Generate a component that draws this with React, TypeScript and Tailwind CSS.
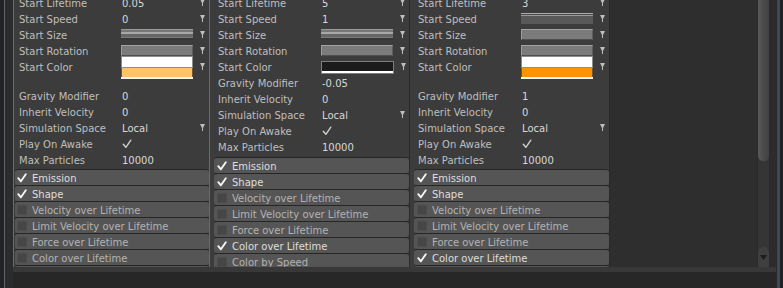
import React from 'react';

type Field =
  | { kind: 'text'; value: string }
  | { kind: 'curve' }
  | { kind: 'curveTop' }
  | { kind: 'box' }
  | { kind: 'gradient'; swatch: string }
  | { kind: 'black' }
  | { kind: 'check' };

type Row = { label: string; field: Field; arrow?: boolean; tall?: boolean };
type Module = { name: string; on: boolean };

type Col = {
  rows: Row[];
  modules: Module[];
  frame: string;
  pad: string;
  labelW: string;
  modWrap: string;
  modPad: string;
};

const tail = (gravity: string): Row[] => [
  { label: 'Gravity Modifier', field: { kind: 'text', value: gravity } },
  { label: 'Inherit Velocity', field: { kind: 'text', value: '0' } },
  { label: 'Simulation Space', field: { kind: 'text', value: 'Local' }, arrow: true },
  { label: 'Play On Awake', field: { kind: 'check' } },
  { label: 'Max Particles', field: { kind: 'text', value: '10000' } },
];

const mods = (colorOn: boolean): Module[] => [
  { name: 'Emission', on: true },
  { name: 'Shape', on: true },
  { name: 'Velocity over Lifetime', on: false },
  { name: 'Limit Velocity over Lifetime', on: false },
  { name: 'Force over Lifetime', on: false },
  { name: 'Color over Lifetime', on: colorOn },
  { name: 'Color by Speed', on: false },
];

const columns: Col[] = [
  {
    frame: 'w-[197px] border-x border-[#3a6fd6]',
    pad: 'pl-[5px]',
    labelW: 'w-[102px]',
    modWrap: 'mt-[1px] ml-[1px]',
    modPad: 'pl-[2px]',
    rows: [
      { label: 'Start Lifetime', field: { kind: 'text', value: '0.05' }, arrow: true },
      { label: 'Start Speed', field: { kind: 'text', value: '0' }, arrow: true },
      { label: 'Start Size', field: { kind: 'curve' }, arrow: true },
      { label: 'Start Rotation', field: { kind: 'box' }, arrow: true },
      { label: 'Start Color', field: { kind: 'gradient', swatch: 'bg-[#ffc468]' }, arrow: true, tall: true },
      ...tail('0'),
    ],
    modules: mods(false),
  },
  {
    frame: 'w-[200px] border-r border-[#2a2a2a]',
    pad: 'pl-[8px]',
    labelW: 'w-[103px]',
    modWrap: 'mt-[2px] ml-[4px]',
    modPad: 'pl-[3px]',
    rows: [
      { label: 'Start Lifetime', field: { kind: 'text', value: '5' }, arrow: true },
      { label: 'Start Speed', field: { kind: 'text', value: '1' }, arrow: true },
      { label: 'Start Size', field: { kind: 'curve' }, arrow: true },
      { label: 'Start Rotation', field: { kind: 'box' }, arrow: true },
      { label: 'Start Color', field: { kind: 'black' }, arrow: true },
      ...tail('-0.05'),
    ],
    modules: mods(true),
  },
  {
    frame: 'w-[200px] border-r border-[#2a2a2a]',
    pad: 'pl-[8px]',
    labelW: 'w-[103px]',
    modWrap: 'mt-[1px] ml-[4px]',
    modPad: 'pl-[3px]',
    rows: [
      { label: 'Start Lifetime', field: { kind: 'text', value: '3' }, arrow: true },
      { label: 'Start Speed', field: { kind: 'curveTop' }, arrow: true },
      { label: 'Start Size', field: { kind: 'box' }, arrow: true },
      { label: 'Start Rotation', field: { kind: 'box' }, arrow: true },
      { label: 'Start Color', field: { kind: 'gradient', swatch: 'bg-[#ff9305]' }, arrow: true, tall: true },
      ...tail('1'),
    ],
    modules: mods(true),
  },
];

function Arrow() {
  return (
    <svg width="5" height="7" viewBox="0 0 5 7" className="ml-[7px] -mt-[2px] shrink-0">
      <path d="M0 0H5L3 4V7H2V4Z" fill="#bdbdbd" />
    </svg>
  );
}

function Tick({ color, width }: { color: string; width: number }) {
  return (
    <svg width="10" height="10" viewBox="0 0 10 10">
      <path d="M1.3 5.2 L3.9 8.3 L8.8 1.2" fill="none" stroke={color} strokeWidth={width} strokeLinecap="round" strokeLinejoin="round" />
    </svg>
  );
}

function FieldView({ field }: { field: Field }) {
  switch (field.kind) {
    case 'text':
      return <div className="w-[72px] pl-[1px] pt-[2px] text-[#d8d8d8]">{field.value}</div>;
    case 'check':
      return (
        <div className="w-[72px] pl-[1px]">
          <Tick color="#cfcfcf" width={1.4} />
        </div>
      );
    case 'curve':
      return (
        <div className="w-[72px] h-[11px] flex flex-col -mt-[2px]">
          <div className="h-[1px] bg-[#9a9a9a]" />
          <div className="h-[2px] bg-[#777777]" />
          <div className="h-[2px] bg-[#a8a8a8]" />
          <div className="h-[3px] bg-[#666666]" />
          <div className="h-[1px] bg-[#7c7c7c]" />
          <div className="h-[2px] bg-[#363636]" />
        </div>
      );
    case 'curveTop':
      return (
        <div className="w-[72px] h-[11px] flex flex-col -mt-[2px]">
          <div className="h-[1px] bg-[#ababab]" />
          <div className="h-[1px] bg-[#4a4a4a]" />
          <div className="h-[1px] bg-[#9a9a9a]" />
          <div className="flex-1 bg-[#595959]" />
        </div>
      );
    case 'box':
      return (
        <div className="w-[72px] h-[11px] -mt-[2px] bg-[#7b7b7b] border border-t-[#a2a2a2] border-l-[#9a9a9a] border-r-[#5e5e5e] border-b-[#4e4e4e]" />
      );
    case 'black':
      return (
        <div className="w-[73px] h-[13px] flex flex-col border border-[#7d7d7d] bg-[#1b1b1b]">
          <div className="flex-1" />
          <div className="h-[2px] bg-white" />
        </div>
      );
    case 'gradient':
      return (
        <div className="w-[72px] flex flex-col mt-[1px]">
          <div className="h-[12px] bg-white border border-[#8d8d8d]" />
          <div className={`h-[9px] ${field.swatch} border-x border-[#6c5836]`} />
          <div className="h-[2px] bg-[#f2f2f2]" />
        </div>
      );
  }
}

function Column({ col }: { col: Col }) {
  return (
    <div className={`${col.frame} h-full shrink-0 bg-[#3c3c3c] overflow-hidden`}>
      <div className={`-mt-[5px] ${col.pad}`}>
        {col.rows.map((r) => (
          <div key={r.label} className={`flex items-start ${r.tall ? 'h-[29px]' : 'h-[16px]'}`}>
            <div className={`${col.labelW} h-[16px] pt-[2px] flex items-center shrink-0 text-[#bfbfbf] whitespace-nowrap`}>
              {r.label}
            </div>
            <div className="h-[16px] flex items-center">
              <FieldView field={r.field} />
              {r.arrow && <Arrow />}
            </div>
          </div>
        ))}
      </div>
      <div className={col.modWrap}>
        {col.modules.map((m) => (
          <div
            key={m.name}
            className={`h-[16px] flex items-center ${col.modPad} border-t border-[#262626] bg-[#555555] rounded-[3px]`}
          >
            {m.on ? (
              <div className="w-[10px] h-[10px] flex items-center justify-center">
                <Tick color="#f4f4f4" width={1.9} />
              </div>
            ) : (
              <div className="w-[10px] h-[10px] rounded-[2px] bg-[#464646] border border-[#4b4b4b]" />
            )}
            <span className={`ml-[5px] pt-[2px] whitespace-nowrap ${m.on ? 'text-[#dedede]' : 'text-[#b3b3b3]'}`}>
              {m.name}
            </span>
          </div>
        ))}
      </div>
    </div>
  );
}

export default function App() {
  return (
    <div className="w-[783px] h-[288px] flex overflow-hidden bg-[#262626] font-['DejaVu_Sans',sans-serif] text-[10px] leading-none">
      <div className="w-[13px] h-full flex shrink-0">
        <div className="w-[4px] bg-[#232323]" />
        <div className="w-[1px] bg-[#5d646c]" />
        <div className="flex-1 bg-[#2c2c2c]" />
      </div>

      <div className="flex-1 flex flex-col">
        <div className="h-[267px] flex">
          {columns.map((c, i) => (
            <Column key={i} col={c} />
          ))}
          <div className="flex-1 bg-[#2e2e2e]" />
          <div className="w-[13px] h-full flex flex-col bg-[#353535] border-x border-[#2a2a2a]">
            <div className="h-[161px] rounded-b-[6px] bg-gradient-to-r from-[#5a5a5a] via-[#4b4b4b] to-[#424242]" />
            <div className="flex-1" />
            <div className="h-[20px] rounded-t-[6px] bg-[#3f3f3f] flex items-center justify-center">
              <svg width="7" height="5" viewBox="0 0 7 5">
                <path d="M0 0H7L3.5 5Z" fill="#1c1c1c" />
              </svg>
            </div>
          </div>
          <div className="w-[6px] bg-[#2c2c2c]" />
        </div>
        <div className="h-[5px] bg-[#383838]" />
        <div className="flex-1 bg-[#272727]" />
      </div>

      <div className="w-[7px] h-full flex shrink-0">
        <div className="w-[1px] bg-[#2a2a2a]" />
        <div className="w-[3px] bg-[#3a4a5c]" />
        <div className="flex-1 bg-[#222222]" />
      </div>
    </div>
  );
}
